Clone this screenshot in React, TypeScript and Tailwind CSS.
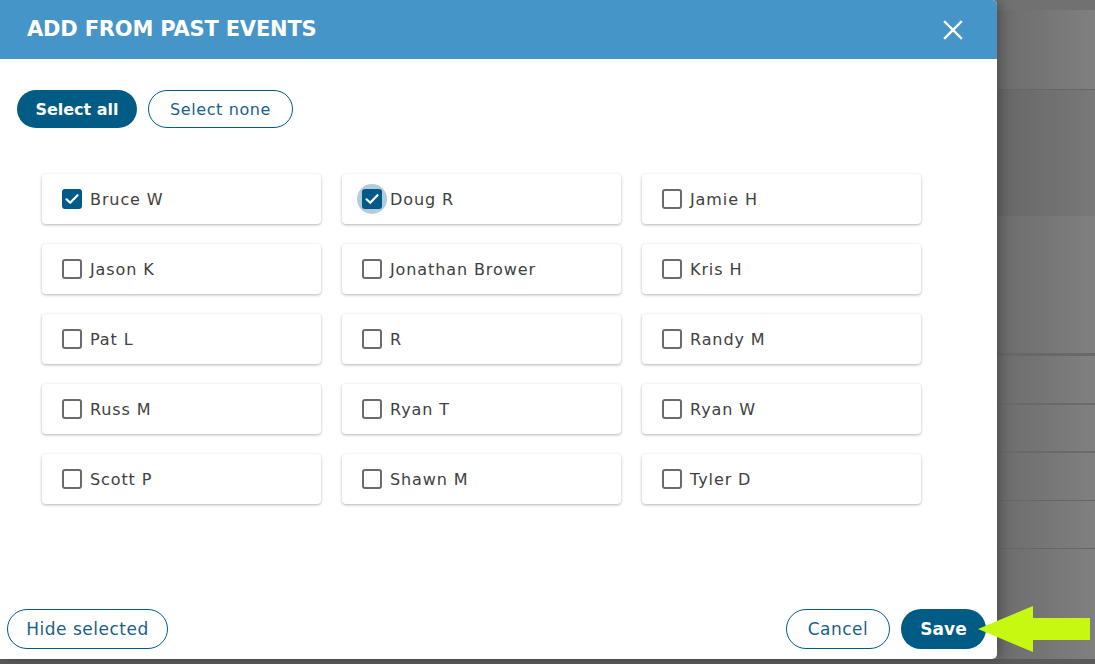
import { useState } from 'react';

const names = [
  'Bruce W', 'Doug R', 'Jamie H',
  'Jason K', 'Jonathan Brower', 'Kris H',
  'Pat L', 'R', 'Randy M',
  'Russ M', 'Ryan T', 'Ryan W',
  'Scott P', 'Shawn M', 'Tyler D',
];

const font = { fontFamily: '"DejaVu Sans", "Open Sans", sans-serif' };

const CheckBox = ({ checked, focus }: { checked: boolean; focus?: boolean }) => (
  <span className="relative flex items-center justify-center w-[20px] h-[20px]">
    {focus && <span className="absolute -inset-[5px] rounded-full bg-[#005b85]/30" />}
    {checked ? (
      <span className="relative w-[20px] h-[20px] rounded-[3px] bg-[#005a87] flex items-center justify-center">
        <svg width="16" height="16" viewBox="0 0 16 16" fill="none">
          <path d="M2.5 8.3 L6.2 11.8 L13.5 4.2" stroke="white" strokeWidth="2.2" strokeLinecap="round" strokeLinejoin="round" />
        </svg>
      </span>
    ) : (
      <span className="relative w-[20px] h-[20px] rounded-[3px] border-2 border-[#6b6b6b] bg-white" />
    )}
  </span>
);

export default function App() {
  const [checked, setChecked] = useState<string[]>(['Bruce W', 'Doug R']);

  const toggle = (n: string) =>
    setChecked((c) => (c.includes(n) ? c.filter((x) => x !== n) : [...c, n]));

  return (
    <div className="relative flex h-[664px] w-[1095px] overflow-hidden bg-[#7b7b7b]" style={font}>
      {/* 모달 */}
      <div className="w-[997px] h-[659px] bg-white rounded-r-[5px] flex flex-col shrink-0 shadow-[4px_0_12px_rgba(0,0,0,0.25)] z-10">
        <div className="h-[59px] bg-[#4595c8] rounded-tr-[5px] flex items-center justify-between pl-[27px] pr-[34px]">
          <h1 className="text-white font-bold text-[21px] tracking-[-0.2px] pt-[1px]">ADD FROM PAST EVENTS</h1>
          <svg width="20" height="20" viewBox="0 0 20 20">
            <path d="M2 2 L18 18 M18 2 L2 18" stroke="white" strokeWidth="2.4" strokeLinecap="square" />
          </svg>
        </div>

        <div className="flex gap-[11px] pl-[17px] pt-[31px]">
          <button
            onClick={() => setChecked(names)}
            className="h-[38px] w-[120px] rounded-full bg-[#005b85] text-white font-bold text-[16px] pt-[2px]"
          >
            Select all
          </button>
          <button
            onClick={() => setChecked([])}
            className="h-[38px] w-[145px] rounded-full border border-[#005b85] text-[#1a5f8a] text-[16px] tracking-[0.6px] pt-[2px]"
          >
            Select none
          </button>
        </div>

        <div className="grid grid-cols-[279px_279px_279px] gap-x-[21px] gap-y-[20px] pl-[42px] pt-[46px]">
          {names.map((n, i) => (
            <label
              key={n}
              onClick={() => toggle(n)}
              className="h-[50px] rounded-[4px] bg-white shadow-[0_1px_3px_rgba(0,0,0,0.3)] flex items-center gap-[8px] pl-[20px] cursor-pointer"
            >
              <CheckBox checked={checked.includes(n)} focus={i === 1} />
              <span className="text-[#404040] text-[16px] tracking-[0.9px] pt-[2px]">{n}</span>
            </label>
          ))}
        </div>

        <div className="mt-auto flex items-center justify-between pl-[7px] pr-[11px] pb-[10px]">
          <button className="h-[40px] w-[161px] rounded-full border border-[#005b85] text-[#1a5f8a] text-[17px] tracking-[0.5px] pt-[2px]">
            Hide selected
          </button>
          <div className="flex gap-[11px]">
            <button className="h-[40px] w-[104px] rounded-full border border-[#005b85] text-[#1a5f8a] text-[17px] tracking-[0.5px] pt-[2px]">
              Cancel
            </button>
            <button className="h-[40px] w-[85px] rounded-full bg-[#005b85] text-white font-bold text-[17px] pt-[2px]">
              Save
            </button>
          </div>
        </div>
      </div>

      {/* 뒤 배경 테이블 */}
      <div className="flex-1 flex flex-col bg-gradient-to-r from-[#6c6c6c] to-[#808080]">
        <div className="h-[10px] bg-[#717171]" />
        <div className="h-[80px] border-b border-[#666]" />
        <div className="h-[126px] bg-black/5" />
        <div className="h-[140px] border-b-[3px] border-[#686868]" />
        <div className="h-[49px] border-b-2 border-[#6a6a6a]" />
        <div className="h-[48px] border-b-2 border-[#6a6a6a]" />
        <div className="h-[48px] border-b border-[#666]" />
        <div className="h-[48px] border-b border-[#666]" />
      </div>

      <div className="absolute left-0 right-0 bottom-0 h-[5px] bg-[#5a5a5a]" />

      {/* 화살표 */}
      <svg className="absolute left-[976px] top-[603px] z-20" width="119" height="52" viewBox="0 0 119 52">
        <path d="M2 26 L57 3 L57 15 L114 15 L114 37 L57 37 L57 49 Z" fill="#c6f812" />
      </svg>
    </div>
  );
}
